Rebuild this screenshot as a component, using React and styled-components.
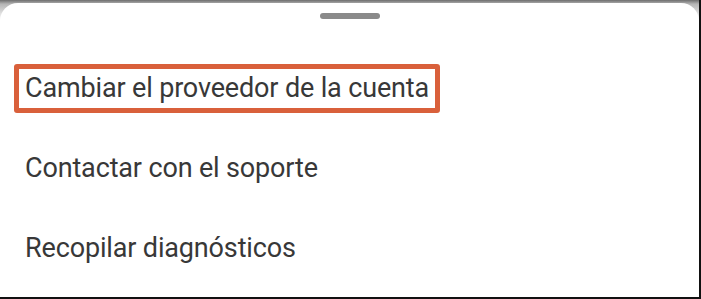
import React from "react";
import styled, { createGlobalStyle } from "styled-components";

const GlobalStyle = createGlobalStyle`
  html, body {
    margin: 0;
    padding: 0;
    background: #ffffff;
  }
  body {
    font-family: Roboto, "Noto Sans", "Liberation Sans", sans-serif;
  }
`;

const Frame = styled.div`
  width: 699px;
  height: 297px;
  border-right: 2px solid #111;
  border-bottom: 2px solid #111;
  background: linear-gradient(to bottom, #6e6e6e 0px, #b5b5b5 4px, #e2e2e2 14px, #ffffff 22px);
  overflow: hidden;
`;

const Sheet = styled.div`
  height: 100%;
  margin-top: 3px;
  background: #ffffff;
  border-radius: 18px 18px 0 0;
  padding-top: 10px;
  box-sizing: border-box;
  display: flex;
  flex-direction: column;
`;

const Handle = styled.div`
  align-self: center;
  width: 60px;
  height: 6px;
  border-radius: 3px;
  background: #8a8a8a;
`;

const List = styled.div`
  margin-top: 29px;
  display: flex;
  flex-direction: column;
`;

const Row = styled.div`
  height: 80px;
  display: flex;
  align-items: center;
  padding-left: ${({ $marked }) => ($marked ? "14px" : "25px")};
`;

const Label = styled.span`
  font-size: 27px;
  line-height: 39px;
  color: #383838;
  letter-spacing: -0.15px;
`;

const Marked = styled(Label)`
  display: inline-block;
  border: 5px solid #d9603b;
  border-radius: 3px;
  padding: 0 6px;
`;

const items = [
  "Cambiar el proveedor de la cuenta",
  "Contactar con el soporte",
  "Recopilar diagnósticos",
];

export default function App() {
  return (
    <>
      <GlobalStyle />
      <Frame>
        <Sheet>
          <Handle />
          <List>
            {items.map((text, i) =>
              i === 0 ? (
                <Row key={text} $marked>
                  <Marked>{text}</Marked>
                </Row>
              ) : (
                <Row key={text}>
                  <Label>{text}</Label>
                </Row>
              )
            )}
          </List>
        </Sheet>
      </Frame>
    </>
  );
}
